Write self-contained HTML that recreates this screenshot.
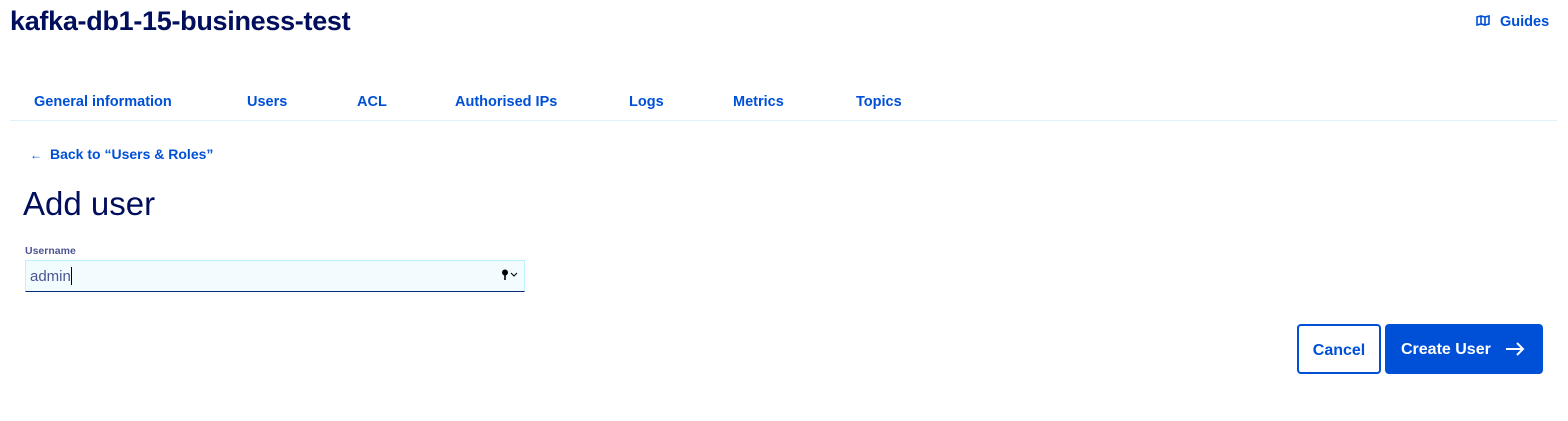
<!DOCTYPE html>
<html><head><style>
body{margin:0;width:1568px;height:421px;background:#fff;font-family:"Liberation Sans",sans-serif;position:relative;overflow:hidden}
.a{position:absolute;white-space:nowrap}
.t{color:#0050d7;font-weight:bold;font-size:14.5px;top:94px}
</style></head><body>
<div class="a" style="left:10px;top:6px;font-size:27px;font-weight:bold;color:#000e5c;letter-spacing:-0.3px">kafka-db1-15-business-test</div>
<div class="a" style="left:1476px;top:14px;color:#0050d7;font-weight:bold;font-size:14.5px">
<svg width="14" height="12" viewBox="0 0 14 12" style="vertical-align:-1px;margin-right:10px"><path d="M1 2v8l4-1 4 1 4-1V1L9 2 5 1z M5 1v8 M9 2v8" fill="none" stroke="#0050d7" stroke-width="1.6"/></svg>Guides</div>
<div class="a t" style="left:34px">General information</div>
<div class="a t" style="left:247px">Users</div>
<div class="a t" style="left:357px">ACL</div>
<div class="a t" style="left:455px">Authorised IPs</div>
<div class="a t" style="left:629px">Logs</div>
<div class="a t" style="left:733px">Metrics</div>
<div class="a t" style="left:856px">Topics</div>
<div class="a" style="left:10px;top:120px;width:1547px;height:1px;background:#ddf0fb"></div>
<div class="a" style="left:30px;top:146px;color:#0050d7;font-weight:bold;font-size:14px"><span style="font-weight:normal;font-size:12px;margin-right:8px">←</span>Back to “Users &amp; Roles”</div>
<div class="a" style="left:23px;top:185px;font-size:33px;color:#000e5c">Add user</div>
<div class="a" style="left:25px;top:245px;font-size:10.5px;font-weight:bold;color:#4d5592">Username</div>
<div class="a" style="left:25px;top:260px;width:498px;height:30px;background:#f2fcff;border:1px solid #bef1ff;border-bottom:1px solid #0a2a7a"></div>
<div class="a" style="left:30px;top:267px;font-size:15px;color:#4d5592">admin<span style="display:inline-block;width:1px;height:18px;background:#000;vertical-align:-4px"></span></div>
<svg class="a" style="left:501px;top:269px" width="18" height="12" viewBox="0 0 18 12"><circle cx="4" cy="3.5" r="3" fill="#000"/><path d="M4 5v6" stroke="#000" stroke-width="1.6"/><path d="M10 4l3 3 3-3" fill="none" stroke="#000" stroke-width="1.1"/></svg>
<div class="a" style="left:1297px;top:324px;width:80px;height:46px;border:2px solid #0050d7;border-radius:4px;color:#0050d7;font-weight:bold;font-size:16px;text-align:center;line-height:50px">Cancel</div>
<div class="a" style="left:1385px;top:324px;width:158px;height:50px;background:#0050d7;border-radius:4px;color:#fff;font-weight:bold;font-size:16px;line-height:52px"><span style="margin-left:16px">Create User</span>
<svg width="20" height="14" viewBox="0 0 20 14" style="position:absolute;left:120px;top:18px"><path d="M1 7h17M12 1l6 6-6 6" fill="none" stroke="#fff" stroke-width="2"/></svg></div>
</body></html>
